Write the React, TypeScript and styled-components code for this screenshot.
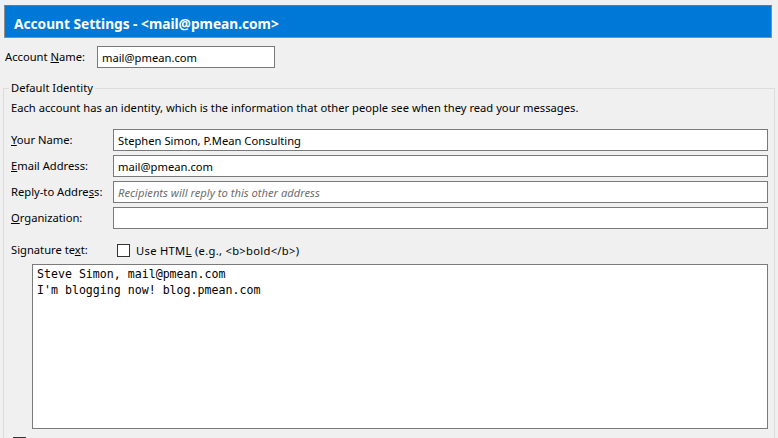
import React from "react";
import styled, { createGlobalStyle } from "styled-components";

const Global = createGlobalStyle`
  html, body { margin: 0; padding: 0; background: #f0f0f0; }
  body { font-family: "Noto Sans", "Open Sans", sans-serif; font-size: 11.2px; color: #000; overflow: hidden; }
  * { box-sizing: border-box; }
`;

const Page = styled.div`
  width: 778px;
  height: 438px;
  padding-top: 5px;
  display: flex;
  flex-direction: column;
  overflow: hidden;
  & > * { flex-shrink: 0; }
`;

const Header = styled.div`
  margin: 0 6px 0 4px;
  height: 33px;
  background: #0078d7;
  border: 1px solid #8e8e8e;
  border-top-color: #767676;
  display: flex;
  align-items: center;
  padding: 3px 0 0 9px;
  color: #fff;
  font-weight: 700;
  font-size: 13.7px;
`;

const AccountRow = styled.div`
  display: flex;
  align-items: center;
  margin-top: 8px;
  padding-left: 5px;
`;

const Label = styled.label<{ $w: number }>`
  width: ${(p) => p.$w}px;
  flex: none;
  line-height: 16px;
  white-space: nowrap;
`;

const TextBox = styled.div<{ $w?: number; $placeholder?: boolean }>`
  height: 22px;
  ${(p) => (p.$w ? `width: ${p.$w}px;` : "flex: 1;")}
  background: #fff;
  border: 1px solid #7a7a7a;
  display: flex;
  align-items: center;
  padding-left: 4px;
  white-space: nowrap;
  ${(p) => p.$placeholder && "color: #6d6d6d; font-style: italic;"}
`;

const Group = styled.fieldset`
  margin: 12px 3px 0 3px;
  padding: 0 6px 0 7px;
  border: 1px solid #dcdcdc;
  border-bottom: none;
  flex: 1 0 auto;
  min-width: 0;
  display: flex;
  flex-direction: column;
  & > * { flex-shrink: 0; }
`;

const Legend = styled.legend`
  padding: 0 2px;
  margin-left: -2px;
  line-height: 16px;
`;

const Desc = styled.div`
  line-height: 16px;
  margin-top: 4px;
  white-space: nowrap;
`;

const Rows = styled.div`
  display: flex;
  flex-direction: column;
  gap: 4px;
  margin-top: 13px;
`;

const Row = styled.div`
  display: flex;
  align-items: center;
`;

const SigRow = styled.div`
  display: flex;
  align-items: center;
  margin-top: 13px;
  height: 16px;
`;

const Check = styled.span`
  width: 13px;
  height: 13px;
  flex: none;
  border: 1px solid #333;
  background: #fff;
  display: inline-block;
`;

const CheckLabel = styled.span`
  margin-left: 6px;
  white-space: nowrap;
  letter-spacing: 0.3px;
`;

const SigBox = styled.div`
  margin: 6px 0 0 21px;
  height: 165px;
  background: #fff;
  border: 1px solid #7a7a7a;
  padding: 1px 4px;
  font-family: "DejaVu Sans Mono", "Liberation Mono", monospace;
  font-size: 11.6px;
  line-height: 16px;
  white-space: pre;
`;

const BottomRow = styled.div`
  margin-top: 8px;
  margin-left: 2px;
  display: flex;
`;

const Key = styled.u``;

export default function App() {
  return (
    <>
      <Global />
      <Page>
        <Header>Account Settings - &lt;mail@pmean.com&gt;</Header>
        <AccountRow>
          <Label $w={92}>
            Account <Key>N</Key>ame:
          </Label>
          <TextBox $w={178}>mail@pmean.com</TextBox>
        </AccountRow>
        <Group>
          <Legend>Default Identity</Legend>
          <Desc>
            Each account has an identity, which is the information that other people see when they read your messages.
          </Desc>
          <Rows>
            <Row>
              <Label $w={102}>
                <Key>Y</Key>our Name:
              </Label>
              <TextBox>Stephen Simon, P.Mean Consulting</TextBox>
            </Row>
            <Row>
              <Label $w={102}>
                <Key>E</Key>mail Address:
              </Label>
              <TextBox>mail@pmean.com</TextBox>
            </Row>
            <Row>
              <Label $w={102}>
                Reply-to Addre<Key>s</Key>s:
              </Label>
              <TextBox $placeholder>Recipients will reply to this other address</TextBox>
            </Row>
            <Row>
              <Label $w={102}>
                <Key>O</Key>rganization:
              </Label>
              <TextBox />
            </Row>
          </Rows>
          <SigRow>
            <Label $w={106}>
              Signature te<Key>x</Key>t:
            </Label>
            <Check />
            <CheckLabel>
              Use HTM<Key>L</Key> (e.g., &lt;b&gt;bold&lt;/b&gt;)
            </CheckLabel>
          </SigRow>
          <SigBox>{"Steve Simon, mail@pmean.com\nI'm blogging now! blog.pmean.com"}</SigBox>
          <BottomRow>
            <Check />
          </BottomRow>
        </Group>
      </Page>
    </>
  );
}
